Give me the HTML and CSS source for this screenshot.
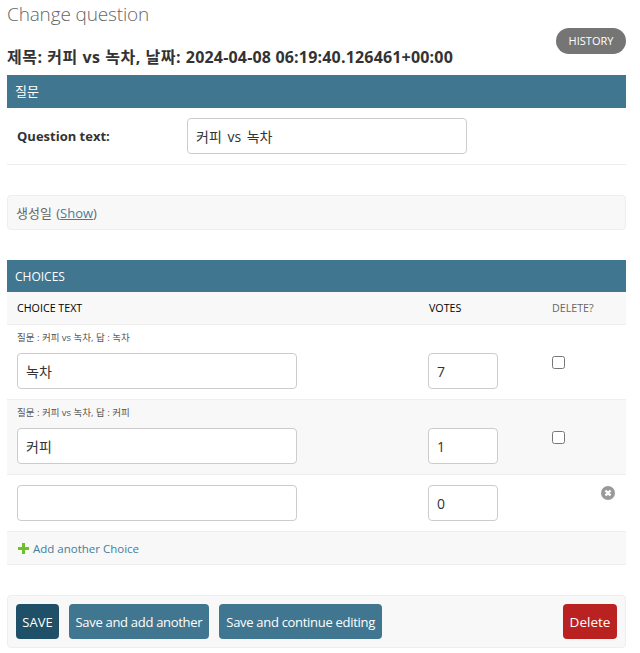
FILE: index.html
```html
<!DOCTYPE html>
<html lang="ko">
<head>
    <meta charset="UTF-8">
    <meta name="viewport" content="width=device-width, initial-scale=1.0">
    <title>Change question</title>
    <link rel="stylesheet" href="styles.css">
</head>

<body>
    <div class="container">
        <h1>Change question</h1>
        <div class="title-row">
            <h2><span class="title-ko">제목: 커피 vs 녹차, 날짜: </span>2024-04-08 06:19:40.126461+00:00</h2>
            <a class="history" href="#">HISTORY</a>
        </div>

        <div class="module-head">질문</div>
        <div class="form-row">
            <label class="form-label">Question text:</label>
            <input class="text-input question-input" type="text" value="커피 vs 녹차">
        </div>

        <div class="collapsed">생성일 (<a href="#">Show</a>)</div>

        <div class="module-head choices-head">CHOICES</div>
        <div class="grid-row table-head">
            <div>CHOICE TEXT</div>
            <div class="votes-label">VOTES</div>
            <div class="delete-label">DELETE?</div>
        </div>

        <div class="grid-row choice">
            <div>
                <p class="original">질문 : 커피 vs 녹차, 답 : 녹차</p>
                <input class="text-input choice-input" type="text" value="녹차">
            </div>
            <div><input class="text-input votes-input" type="text" value="7"></div>
            <div><input class="check" type="checkbox"></div>
        </div>

        <div class="grid-row choice alt">
            <div>
                <p class="original">질문 : 커피 vs 녹차, 답 : 커피</p>
                <input class="text-input choice-input" type="text" value="커피">
            </div>
            <div><input class="text-input votes-input" type="text" value="1"></div>
            <div><input class="check" type="checkbox"></div>
        </div>

        <div class="grid-row choice empty">
            <div><input class="text-input choice-input" type="text"></div>
            <div><input class="text-input votes-input" type="text" value="0"></div>
            <div class="remove-cell">
                <svg class="remove" width="14" height="14" viewBox="0 0 14 14">
                    <circle cx="7" cy="7" r="7" fill="#999"/>
                    <path d="M4.5 4.5l5 5M9.5 4.5l-5 5" stroke="#fff" stroke-width="2.4" fill="none"/>
                </svg>
            </div>
        </div>

        <div class="add-row">
            <svg width="11" height="11" viewBox="0 0 11 11">
                <path d="M4 0h3v4h4v3H7v4H4V7H0V4h4z" fill="#70bf2b"/>
            </svg>
            <a href="#">Add another Choice</a>
        </div>

        <div class="submit-row">
            <button class="btn btn-save">SAVE</button>
            <button class="btn btn-long">Save and add another</button>
            <button class="btn btn-long btn-continue">Save and continue editing</button>
            <button class="btn btn-delete">Delete</button>
        </div>
    </div>
</body>
</html>
```

FILE: styles.css
```css
body {
    margin: 0;
    padding: 0;
    background-color: #fff;
    color: #333;
    font-family: "Open Sans", "Noto Sans CJK KR", sans-serif;
    font-size: 14px;
}

a {
    color: #447e9b;
}

.container {
    margin: 0 14px 0 7px;
}

h1 {
    margin: 0;
    padding-top: 1px;
    height: 30px;
    font-size: 19px;
    line-height: 27px;
    font-weight: 300;
    letter-spacing: -.15px;
    color: #666;
}

.title-row {
    display: flex;
    justify-content: space-between;
    align-items: flex-start;
    height: 44px;
}

h2 {
    margin: 0;
    padding-top: 15px;
    font-size: 16px;
    line-height: 22px;
    font-weight: 700;
    letter-spacing: .18px;
    color: #333;
    white-space: nowrap;
}

.title-ko {
    letter-spacing: .53px;
}

.history {
    flex: none;
    width: 70px;
    height: 26px;
    margin-top: -3px;
    border-radius: 13px;
    background-color: #757575;
    color: #fff;
    font-size: 11px;
    line-height: 26px;
    text-align: center;
    text-decoration: none;
}

.module-head {
    height: 33px;
    padding-left: 8px;
    background-color: #417690;
    color: #fff;
    font-size: 13px;
    line-height: 32px;
}

.form-row {
    display: flex;
    align-items: center;
    height: 56px;
    padding-left: 10px;
    border-bottom: 1px solid #eee;
}

.form-label {
    width: 170px;
    font-size: 13px;
    font-weight: 700;
}

.text-input {
    box-sizing: border-box;
    height: 36px;
    margin: 0;
    padding: 0 8px;
    border: 1px solid #ccc;
    border-radius: 4px;
    background-color: #fff;
    color: #333;
    font-family: inherit;
    font-size: 14px;
}

.question-input {
    width: 280px;
    word-spacing: 2px;
}

.choice-input {
    display: block;
    width: 280px;
}

.votes-input {
    display: block;
    width: 70px;
}

.collapsed {
    box-sizing: border-box;
    height: 35px;
    margin-top: 30px;
    padding-left: 8px;
    border: 1px solid #eee;
    border-radius: 4px;
    background-color: #f8f8f8;
    color: #666;
    font-size: 13px;
    line-height: 34px;
    word-spacing: 1px;
}

.choices-head {
    height: 32px;
    margin-top: 30px;
    line-height: 34px;
    font-size: 12px;
}

.grid-row {
    display: grid;
    grid-template-columns: 411px 124px 1fr;
    padding-left: 10px;
    box-sizing: border-box;
    border-bottom: 1px solid #eee;
}

.table-head {
    height: 33px;
    align-items: center;
    background-color: #f8f8f8;
    color: #000;
    font-size: 10.7px;
}

.votes-label {
    padding-left: 1px;
}

.delete-label {
    color: #666;
}

.choice {
    height: 75px;
    padding-top: 3px;
}

.alt {
    background-color: #f8f8f8;
}

.empty {
    height: 57px;
    padding-top: 10px;
}

.original {
    margin: 0 0 7px;
    height: 18px;
    font-size: 9.5px;
    line-height: 19px;
    color: #555;
}

.choice > div:nth-child(2) {
    padding-top: 25px;
}

.empty > div:nth-child(2) {
    padding-top: 0;
}

.check {
    display: block;
    width: 13px;
    height: 13px;
    margin: 28px 0 0;
}

.remove-cell {
    padding-left: 49px;
}

.remove {
    display: block;
    margin-top: 1px;
}

.add-row {
    display: flex;
    align-items: center;
    gap: 4px;
    box-sizing: border-box;
    height: 33px;
    padding-left: 11px;
    border-bottom: 1px solid #eee;
    background-color: #f8f8f8;
    font-size: 11.5px;
}

.add-row a {
    text-decoration: none;
}

.submit-row {
    display: flex;
    align-items: center;
    gap: 10px;
    box-sizing: border-box;
    height: 53px;
    margin-top: 30px;
    padding: 0 8px;
    border: 1px solid #eee;
    border-radius: 4px;
    background-color: #f8f8f8;
}

.btn {
    height: 35px;
    padding: 0 7px;
    border: none;
    border-radius: 4px;
    background-color: #417690;
    color: #fff;
    font-family: inherit;
    font-size: 13px;
}

.btn-save {
    width: 43px;
    padding: 0;
    background-color: #205067;
}

.btn-long {
    padding: 0 6.5px;
    letter-spacing: -.3px;
}

.btn-continue {
    padding: 0 7.5px;
}

.btn-delete {
    width: 54px;
    padding: 0;
    margin-left: auto;
    background-color: #ba2121;
    font-size: 13.5px;
}
```
